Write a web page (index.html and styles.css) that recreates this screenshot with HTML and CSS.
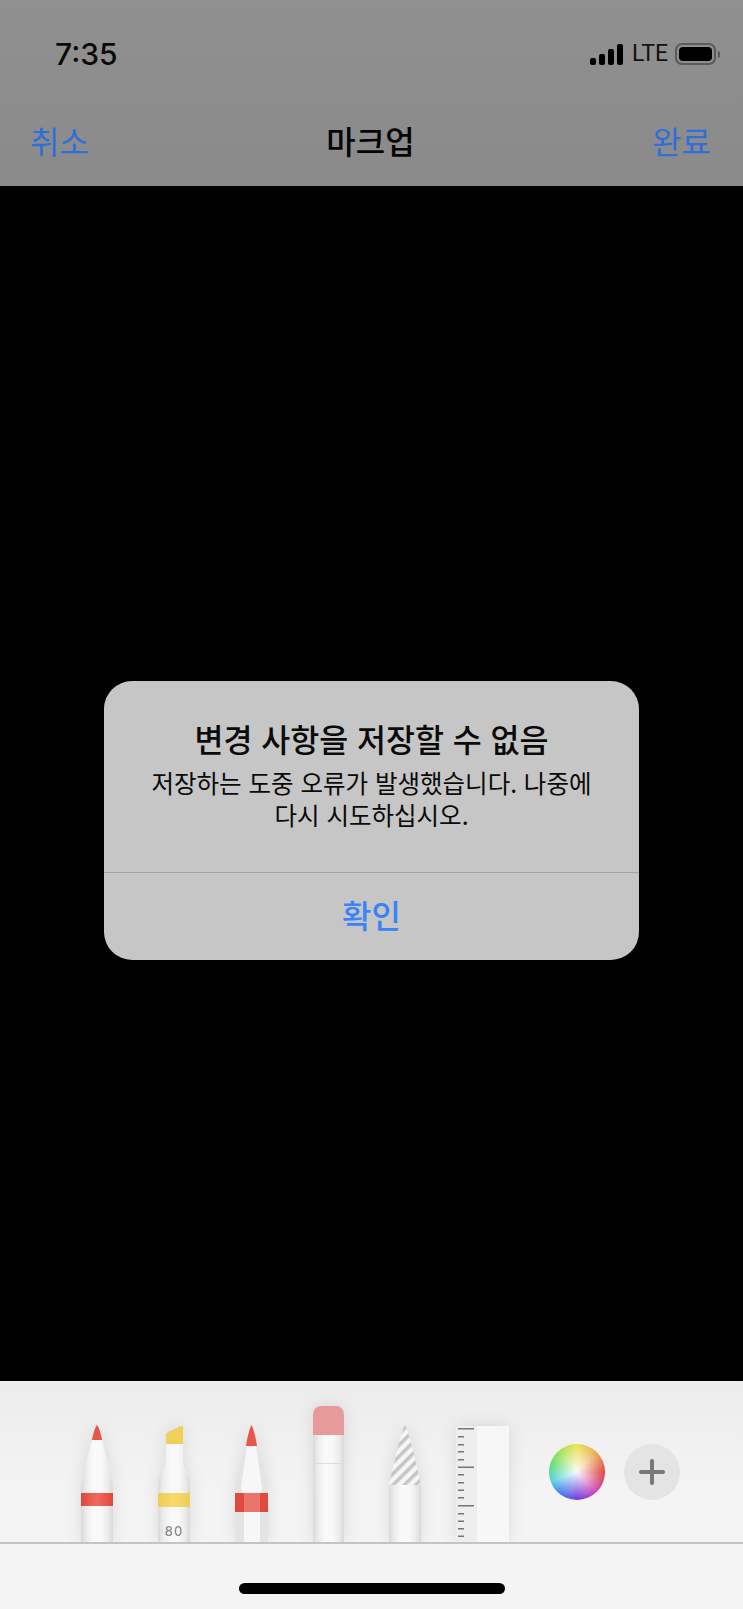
FILE: index.html
```html
<!DOCTYPE html>
<html lang="ko">
<head>
  <meta charset="UTF-8" />
  <meta name="viewport" content="width=device-width, initial-scale=1.0" />
  <title>마크업</title>
  <link rel="stylesheet" href="styles.css">
</head>
<body>

  <header class="top">
    <div class="status">
      <span class="time">7:35</span>
      <div class="status-right">
        <div class="signal"><i class="bar1"></i><i class="bar2"></i><i class="bar3"></i><i class="bar4"></i></div>
        <span class="lte">LTE</span>
        <div class="battery"><div class="battery-fill"></div></div>
        <div class="battery-nub"></div>
      </div>
    </div>
    <nav class="nav">
      <span class="nav-link">취소</span>
      <span class="nav-title">마크업</span>
      <span class="nav-link">완료</span>
    </nav>
  </header>

  <main class="canvas">
    <div class="alert">
      <div class="alert-body">
        <h2 class="alert-title">변경 사항을 저장할 수 없음</h2>
        <p class="alert-msg">저장하는 도중 오류가 발생했습니다. 나중에<br>다시 시도하십시오.</p>
      </div>
      <div class="alert-btn">확인</div>
    </div>
  </main>

  <section class="toolbar">
    <div class="tools">
      <!-- pen -->
      <svg class="tool" width="40" height="142" viewBox="0 0 40 142">
        <defs>
          <linearGradient id="body" x1="0" x2="1" y1="0" y2="0">
            <stop offset="0" stop-color="#d9d9d9" />
            <stop offset="0.16" stop-color="#ececec" />
            <stop offset="0.38" stop-color="#f9f9f9" />
            <stop offset="0.62" stop-color="#f9f9f9" />
            <stop offset="0.84" stop-color="#ececec" />
            <stop offset="1" stop-color="#d9d9d9" />
          </linearGradient>
          <linearGradient id="redband" x1="0" x2="1" y1="0" y2="0">
            <stop offset="0" stop-color="#e0483c" />
            <stop offset="0.5" stop-color="#ee6a60" />
            <stop offset="1" stop-color="#e0483c" />
          </linearGradient>
          <linearGradient id="yellowband" x1="0" x2="1" y1="0" y2="0">
            <stop offset="0" stop-color="#efcb55" />
            <stop offset="0.5" stop-color="#f7da6e" />
            <stop offset="1" stop-color="#efcb55" />
          </linearGradient>
          <pattern id="stripes" width="8" height="8" patternUnits="userSpaceOnUse" patternTransform="rotate(-45)">
            <rect width="8" height="8" fill="#f6f6f6" />
            <rect width="8" height="3.6" fill="#c6c6c6" />
          </pattern>
        </defs>
        <path d="M15 40 L25 40 C29 56 34 70 36 88 L36 142 L4 142 L4 88 C6 70 11 56 15 40 Z" fill="url(#body)" />
        <path d="M20 25 C22 27 24 34 25 40 L15 40 C16 34 18 27 20 25 Z" fill="#e5574b" />
        <rect x="4" y="93" width="32" height="13" fill="url(#redband)" />
      </svg>
      <!-- marker -->
      <svg class="tool" width="40" height="142" viewBox="0 0 40 142">
        <path d="M12 44 L29 44 L29 60 C29 72 36 74 36 84 L36 142 L4 142 L4 84 C4 74 12 72 12 60 Z" fill="url(#body)" />
        <path d="M12 35 Q12 33 14 32 L27 26 Q29 25 29 27 L29 44 L12 44 Z" fill="#f0cf5b" />
        <rect x="4" y="93" width="32" height="14" fill="url(#yellowband)" />
        <text class="marker-num" x="20" y="136" text-anchor="middle">80</text>
      </svg>
      <!-- pencil -->
      <svg class="tool" width="40" height="142" viewBox="0 0 40 142">
        <path d="M15 46 L26 46 L37 88 L37 142 L4 142 L4 88 Z" fill="#e4e4e4" />
        <path d="M16 46 L25 46 L31 87 L29 112 L29 142 L13 142 L13 112 L10 87 Z" fill="#f7f7f7" />
        <path d="M20.5 25 C22 27 25 38 26 46 L15 46 C16 38 19 27 20.5 25 Z" fill="#e5574b" />
        <rect x="4" y="93" width="33" height="19" fill="#de4a3d" />
        <rect x="13" y="93" width="16" height="19" fill="#ea756b" />
      </svg>
      <!-- eraser -->
      <svg class="tool" width="40" height="142" viewBox="0 0 40 142">
        <rect x="5" y="35" width="31" height="107" fill="url(#body)" />
        <path d="M5 35 L5 15 Q5 6 14 6 L27 6 Q36 6 36 15 L36 35 Z" fill="#e79a9a" />
        <rect x="5" y="63" width="31" height="1" fill="#dcdcdc" />
      </svg>
      <!-- lasso -->
      <svg class="tool" width="40" height="142" viewBox="0 0 40 142">
        <rect x="4" y="85" width="32" height="57" fill="url(#body)" />
        <path d="M20 25 C22 26 33 70 36 85 L4 85 C7 70 18 26 20 25 Z" fill="url(#stripes)" />
      </svg>
      <!-- ruler -->
      <svg class="tool ruler" width="53" height="142" viewBox="0 0 53 142">
        <rect x="0" y="26" width="53" height="116" fill="#f7f7f7" />
        <rect x="0" y="26" width="21" height="116" fill="#eeeeee" />
        <g fill="#777">
          <rect x="2" y="28" width="16" height="1.5" />
          <rect x="2" y="36" width="6" height="1.5" />
          <rect x="2" y="44" width="6" height="1.5" />
          <rect x="2" y="51" width="6" height="1.5" />
          <rect x="2" y="59" width="6" height="1.5" />
          <rect x="2" y="66.500" width="16" height="1.5" />
          <rect x="2" y="74" width="6" height="1.5" />
          <rect x="2" y="82" width="6" height="1.5" />
          <rect x="2" y="89.500" width="6" height="1.5" />
          <rect x="2" y="97" width="6" height="1.5" />
          <rect x="2" y="105" width="16" height="1.5" />
          <rect x="2" y="113" width="6" height="1.5" />
          <rect x="2" y="120.500" width="6" height="1.5" />
          <rect x="2" y="128" width="6" height="1.5" />
          <rect x="2" y="135.500" width="6" height="1.5" />
        </g>
      </svg>
      <div class="wheel"></div>
      <div class="plus">
        <svg width="26" height="26" viewBox="0 0 26 26">
          <path d="M13 2 V24 M2 13 H24" stroke="#77777c" stroke-width="4" stroke-linecap="round" fill="none" />
        </svg>
      </div>
    </div>
    <div class="home-area">
      <div class="home-bar"></div>
    </div>
  </section>

</body>
</html>
```

FILE: styles.css
```css
* {
  box-sizing: border-box;
}

html, body {
  margin: 0;
  padding: 0;
}

body {
  width: 743px;
  height: 1609px;
  overflow: hidden;
  display: flex;
  flex-direction: column;
  font-family: "Noto Sans CJK KR", "Noto Sans", sans-serif;
  background-color: #000;
}

/* top bars */
.top {
  height: 186px;
  background: linear-gradient(#909090, #8a8a8a);
  padding: 0 32px 0 30px;
}

.status {
  height: 106px;
  display: flex;
  justify-content: space-between;
  align-items: center;
  padding: 2px 0 0 25px;
}

.time {
  font-family: Inter, "Noto Sans", sans-serif;
  font-size: 30px;
  font-weight: 550;
  color: #0a0a0a;
}

.status-right {
  display: flex;
  align-items: center;
  margin-right: -9px;
}

.signal {
  display: flex;
  align-items: flex-end;
  gap: 3px;
  height: 21px;
}

.signal i {
  display: block;
  width: 6px;
  background-color: #000;
  border-radius: 2px;
}

.bar1 { height: 7px; }
.bar2 { height: 11px; }
.bar3 { height: 16px; }
.bar4 { height: 21px; }

.lte {
  font-family: "Liberation Sans Narrow", Roboto, sans-serif;
  font-size: 23px;
  line-height: 24px;
  color: #111;
  margin-left: 9px;
  width: 43px;
}

.battery {
  width: 41px;
  height: 22px;
  border: 2px solid #5a5a5a;
  border-radius: 7px;
  padding: 2px;
}

.battery-fill {
  height: 100%;
  background-color: #000;
  border-radius: 4px;
}

.battery-nub {
  width: 2px;
  height: 7px;
  margin-left: 2px;
  background-color: #5a5a5a;
  border-radius: 0 2px 2px 0;
}

.nav {
  display: flex;
  justify-content: space-between;
  align-items: center;
  height: 68px;
}

.nav-link {
  font-size: 32px;
  color: #2e6fd9;
}

.nav-title {
  font-size: 32px;
  font-weight: 500;
  color: #050505;
}

/* black canvas + alert */
.canvas {
  flex: 1;
  background-color: #000;
  padding: 495px 104px 0;
}

.alert {
  width: 535px;
  height: 279px;
  background-color: #c6c6c6;
  border-radius: 28px;
  display: flex;
  flex-direction: column;
  text-align: center;
  color: #0a0a0a;
}

.alert-body {
  flex: 1;
  padding-top: 35px;
  border-bottom: 1px solid #a3a3a3;
}

.alert-title {
  margin: 0;
  font-size: 31.5px;
  line-height: 44px;
  font-weight: 500;
}

.alert-msg {
  margin: 0;
  font-size: 24.5px;
  line-height: 32px;
  padding-top: 7px;
}

.alert-btn {
  height: 87px;
  padding-bottom: 5px;
  display: flex;
  align-items: center;
  justify-content: center;
  font-size: 32px;
  font-weight: 500;
  color: #3a82f7;
}

/* bottom tool tray */
.toolbar {
  height: 228px;
  background: linear-gradient(#ececec, #f4f4f4 50%);
}

.tools {
  height: 163px;
  display: flex;
  align-items: flex-end;
  gap: 37px;
  padding-left: 77px;
  border-bottom: 2px solid #c4c4c4;
  overflow: hidden;
  position: relative;
}

.tool {
  display: block;
  flex-shrink: 0;
  filter: drop-shadow(0 0 8px rgba(0, 0, 0, 0.1));
}

.ruler {
  margin-left: -6px;
}

.marker-num {
  font-family: Inter, "Noto Sans", sans-serif;
  font-size: 13px;
  font-weight: 500;
  letter-spacing: 1px;
  fill: #8a8a8a;
}

.wheel, .plus {
  position: absolute;
  top: 63px;
  width: 56px;
  height: 56px;
  border-radius: 50%;
}

.wheel {
  left: 549px;
  background:
    radial-gradient(circle, rgba(255, 255, 255, 0.95), rgba(255, 255, 255, 0) 72%),
    conic-gradient(#eee04f, #e8a850 45deg, #e0403a 90deg, #d03fb0 135deg, #6a35dc 180deg, #3f7ce8 220deg, #4fd0e0 250deg, #5fdc6a 290deg, #a8e050 325deg, #eee04f);
}

.plus {
  left: 624px;
  background-color: #e4e4e4;
  display: flex;
  align-items: center;
  justify-content: center;
}

.home-area {
  height: 65px;
  display: flex;
  justify-content: center;
  padding-top: 39px;
}

.home-bar {
  width: 266px;
  height: 11px;
  background-color: #000;
  border-radius: 6px;
}
```
